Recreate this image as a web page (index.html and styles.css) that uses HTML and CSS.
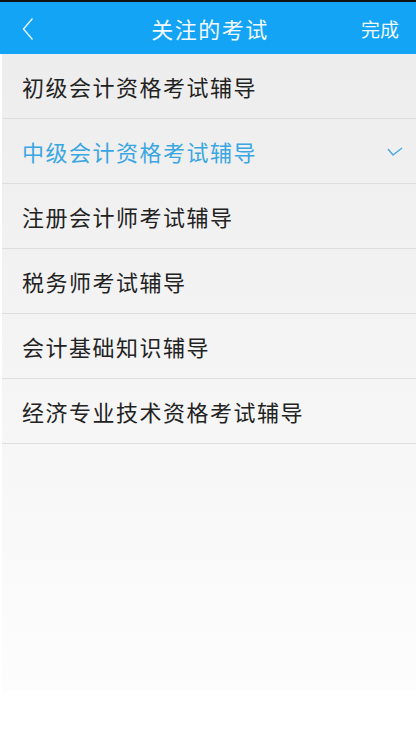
FILE: index.html
```html
<!DOCTYPE html>
<html lang="zh-CN">
<head>
    <meta charset="UTF-8">
    <meta name="viewport" content="width=device-width, initial-scale=1.0">
    <title>关注的考试</title>
    <link rel="stylesheet" href="styles.css">
</head>
<body>
    <!-- Barra superior -->
    <div class="status-strip"></div>
    <header class="top-bar">
        <span class="back">
            <svg width="12" height="24" viewBox="0 0 12 24">
                <polyline points="10.5,1.5 1.5,12 10.5,22.5" fill="none" stroke="#e6f4fd" stroke-width="1.4"/>
            </svg>
        </span>
        <h1 class="title">关注的考试</h1>
        <span class="done">完成</span>
    </header>

    <!-- Lista de exámenes -->
    <div class="panel">
        <ul class="exam-list">
            <li>初级会计资格考试辅导</li>
            <li class="selected">
                中级会计资格考试辅导
                <svg class="check" width="16" height="10" viewBox="0 0 16 10">
                    <polyline points="1,2 6,8 15,1" fill="none" stroke="#4aa9e6" stroke-width="1.4"/>
                </svg>
            </li>
            <li>注册会计师考试辅导</li>
            <li>税务师考试辅导</li>
            <li>会计基础知识辅导</li>
            <li>经济专业技术资格考试辅导</li>
        </ul>
    </div>
</body>
</html>
```

FILE: styles.css
```css
body {
    margin: 0;
    font-family: "Noto Sans CJK SC", "Noto Sans", sans-serif;
    background-color: #ffffff;
    width: 416px;
    height: 729px;
    overflow: hidden;
}

.status-strip {
    height: 2px;
    background-color: #111;
}

/* Cabecera azul */
.top-bar {
    height: 52px;
    background-color: #13a4f5;
    display: grid;
    grid-template-columns: 1fr auto 1fr;
    align-items: center;
    color: #f2f9fe;
}

.back {
    display: flex;
    margin-left: 22px;
    margin-top: 2px;
}

.title {
    margin: 0 0 0 4px;
    font-size: 22px;
    font-weight: normal;
    letter-spacing: 1.5px;
}

.done {
    justify-self: end;
    font-size: 19px;
    margin-right: 17px;
}

/* Panel con degradado */
.panel {
    margin-left: 2px;
    height: 637px;
    background: linear-gradient(#ededed, #f3f3f3 40%, #fdfdfd);
}

.exam-list {
    list-style: none;
    margin: 0;
    padding: 0;
}

.exam-list li {
    height: 64px;
    border-bottom: 1px solid #dedede;
    display: flex;
    align-items: center;
    padding-left: 20px;
    font-size: 22px;
    color: #222;
    letter-spacing: 1.5px;
}

.exam-list li.selected {
    color: #3aa6e2;
    justify-content: space-between;
    padding-right: 13px;
}

.check {
    margin-top: 2px;
}
```
